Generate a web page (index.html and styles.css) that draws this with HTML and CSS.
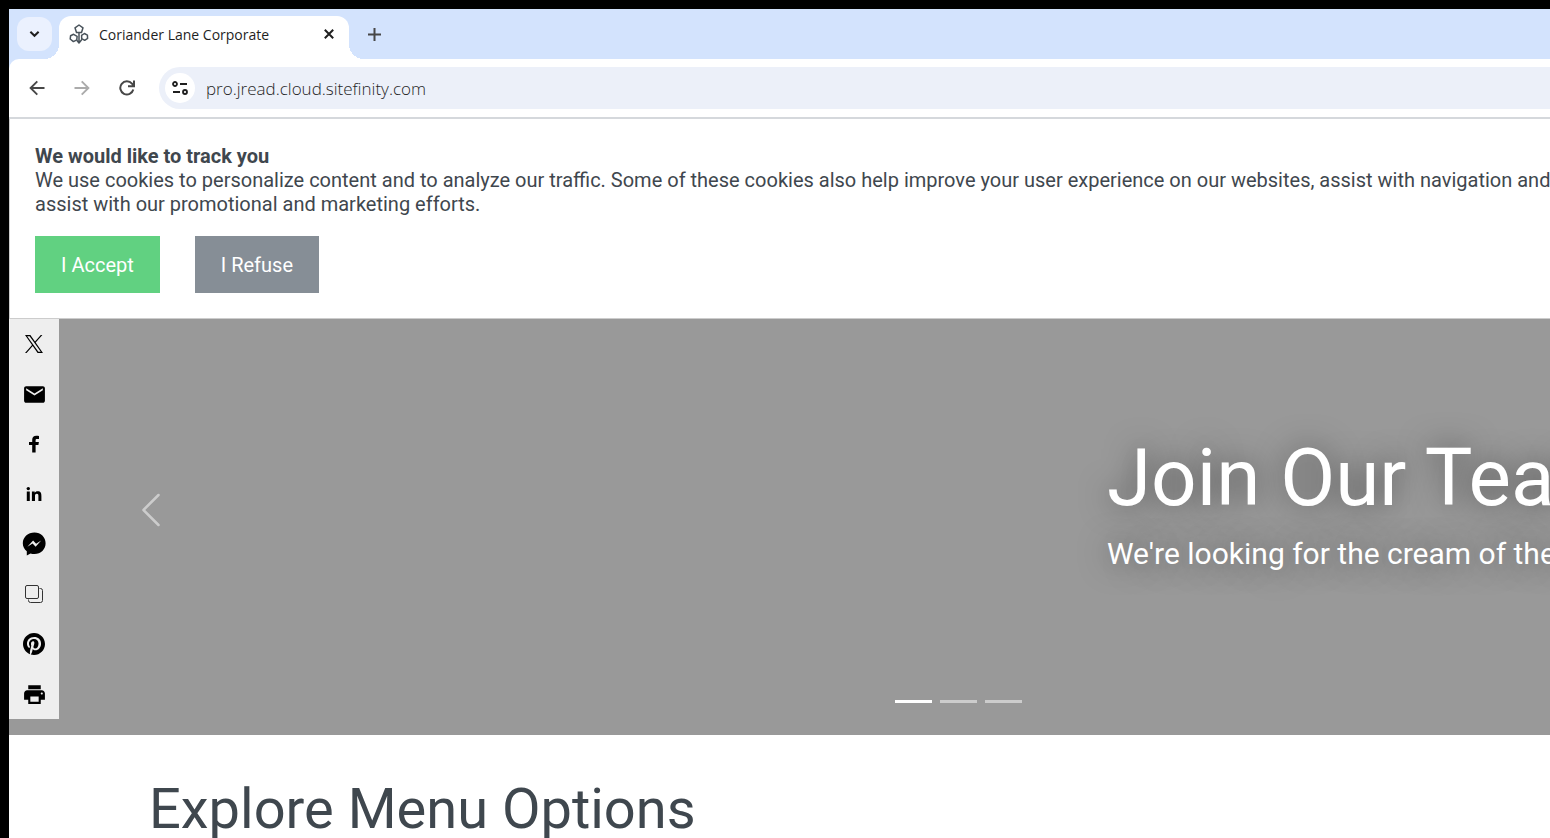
FILE: index.html
```html
<!DOCTYPE html>
<html lang="en">
<head>
<meta charset="utf-8">
<title>Coriander Lane Corporate</title>
<link rel="stylesheet" href="styles.css">
</head>
<body>
<div class="browser">
  <header class="chrome">
    <div class="tab-strip">
      <button class="tab-search" aria-label="Search tabs">
        <svg width="11" height="8" viewBox="0 0 12 8"><path d="M1.500 1.500 6 6l4.500-4.500" fill="none" stroke="#1f1f1f" stroke-width="2.200"/></svg>
      </button>
      <div class="tab">
        <svg class="tab-icon" width="20" height="20" viewBox="0 0 20 20" fill="none" stroke="#48525a" stroke-width="1.500" stroke-linejoin="round"><path d="M10 1l4 2.800-1.500 4.700h-5L6 3.800zM4.600 10.300l3.500 2-.3 3.600-3.400 1.700L1.200 15l.4-3.300zM15.400 9.500l3 1.600.2 3.300-2.900 1.900-3-1.600-.1-3.300z"/><path d="M10 8.500v11M7.800 16.200 10 19l3-3.800"/></svg>
        <span class="tab-title">Coriander Lane Corporate</span>
        <button class="tab-close" aria-label="Close tab">
          <svg width="10" height="10" viewBox="0 0 10 10"><path d="M.8.8l8.400 8.400M9.200.8.8 9.200" stroke="#1f1f1f" stroke-width="2"/></svg>
        </button>
      </div>
      <button class="new-tab" aria-label="New tab">
        <svg width="13" height="13" viewBox="0 0 13 13"><path d="M6.500 0v13M0 6.500h13" stroke="#474747" stroke-width="2"/></svg>
      </button>
    </div>
    <div class="toolbar">
      <button class="nav-button" aria-label="Back">
        <svg width="16" height="16" viewBox="0 0 16 16" fill="none" stroke="#474747" stroke-width="1.900"><path d="M15.500 8H2M8.300 1.300 1.600 8l6.700 6.700"/></svg>
      </button>
      <button class="nav-button" aria-label="Forward">
        <svg width="16" height="16" viewBox="0 0 16 16" fill="none" stroke="#ababab" stroke-width="1.900"><path d="M.5 8H14M7.700 1.300 14.400 8l-6.700 6.700"/></svg>
      </button>
      <button class="nav-button" aria-label="Reload">
        <svg width="16" height="16" viewBox="0 0 16 16" fill="none" stroke="#474747" stroke-width="2"><path d="M14.300 9.500A6.600 6.600 0 1 1 13 3.700L14.500 5.500M15 .5v5.700H9"/></svg>
      </button>
      <div class="omnibox">
        <button class="site-info" aria-label="View site information">
          <svg width="16" height="14" viewBox="0 0 16 14" fill="none" stroke="#1f1f1f" stroke-width="1.800"><circle cx="3" cy="3" r="2"/><circle cx="13" cy="11" r="2"/><path d="M8 3h7M1 11h7"/></svg>
        </button>
        <input class="address" type="text" aria-label="Address" value="pro.jread.cloud.sitefinity.com">
      </div>
    </div>
  </header>

  <section class="consent" aria-label="Cookie consent">
    <strong>We would like to track you</strong>
    <p>We use cookies to personalize content and to analyze our traffic. Some of these cookies also help improve your user experience on our websites, assist with navigation and<br>assist with our promotional and marketing efforts.</p>
    <div class="consent-actions">
      <button class="consent-button accept">I Accept</button>
      <button class="consent-button refuse">I Refuse</button>
    </div>
  </section>

  <main>
    <section class="hero">
      <nav class="share" aria-label="Share">
        <a href="#" aria-label="X"><svg width="18" height="18" viewBox="0 0 24 24"><path d="M14.258 10.152 23.176 0h-2.113l-7.747 8.813L7.133 0H0l9.352 13.328L0 23.973h2.113l8.176-9.309 6.531 9.309h7.133zM11.360 13.447l-.949-1.329L2.875 1.560h3.246l6.086 8.523.945 1.328 7.910 11.077h-3.246z"/></svg></a>
        <a href="#" aria-label="Email"><svg width="25" height="25" viewBox="0 0 24 24"><path d="M20 4H4c-1.100 0-2 .9-2 2v12c0 1.100.9 2 2 2h16c1.100 0 2-.9 2-2V6c0-1.100-.9-2-2-2zm0 4-8 5-8-5V6l8 5 8-5z"/></svg></a>
        <a href="#" aria-label="Facebook"><svg width="18" height="18" viewBox="0 0 18 18"><path d="M14 3.900h-2c-1 0-1.400.5-1.400 1.400v1.800h3.300l-.5 2.800h-2.800V17.500H7.200V9.900H4V7.100h3.200V4.800C7.200 2.300 8.800.8 11.200.8c1.200 0 2.100.1 2.800.2z"/></svg></a>
        <a href="#" aria-label="LinkedIn"><svg width="16" height="16" viewBox="0 0 16 16"><circle cx="2.300" cy="2.600" r="1.700"/><path d="M.8 5.500h3V15h-3zM5.900 5.500h2.800v1.300c.5-.9 1.500-1.600 3-1.600 3.100 0 3.700 2 3.700 4.700V15h-3v-4.700c0-1.200 0-2.500-1.600-2.500S9 9 9 10.300V15H5.900z"/></svg></a>
        <a href="#" aria-label="Messenger"><svg width="24" height="24" viewBox="0 0 24 24"><path d="M12.500.5C6 .5.8 5.100.8 11.200c0 3.400 1.600 6.100 4 8.100V23.500l3.700-2.100c1.300.4 2.600.6 4 .6 6.300 0 11.100-4.800 11.100-10.800S18.800.5 12.500.5zM5.400 14.700l5.700-6.200 3 3.300 5.100-3.300-5.600 6.300-3-3.300z"/></svg></a>
        <a href="#" aria-label="Copy link"><svg width="18" height="18" viewBox="0 0 18 18" fill="none" stroke="#333"><path d="M14.500 3.500h1q2 0 2 2v10q0 2-2 2h-10q-2 0-2-2v-1"/><rect x=".5" y=".5" width="13" height="13" rx="1.500"/></svg></a>
        <a href="#" aria-label="Pinterest"><svg width="22" height="22" viewBox="0 0 24 24"><path d="M12 0C5.370 0 0 5.370 0 12c0 5.090 3.160 9.430 7.630 11.180-.11-.95-.2-2.410.04-3.440.22-.94 1.410-5.960 1.410-5.960s-.36-.72-.36-1.780c0-1.670.97-2.910 2.170-2.910 1.020 0 1.520.77 1.520 1.690 0 1.030-.66 2.570-1 3.990-.28 1.190.6 2.170 1.780 2.170 2.130 0 3.770-2.250 3.770-5.490 0-2.870-2.060-4.880-5.010-4.880-3.410 0-5.410 2.560-5.410 5.200 0 1.030.4 2.140.89 2.740.1.120.11.220.08.340-.09.380-.29 1.190-.33 1.360-.05.220-.17.270-.4.160-1.500-.7-2.430-2.890-2.430-4.650 0-3.780 2.750-7.260 7.930-7.260 4.160 0 7.400 2.970 7.400 6.930 0 4.140-2.610 7.460-6.230 7.460-1.220 0-2.360-.63-2.750-1.380l-.75 2.850c-.27 1.040-1 2.350-1.490 3.150 1.120.35 2.310.53 3.540.53 6.630 0 12-5.370 12-12S18.630 0 12 0z"/></svg></a>
        <a href="#" aria-label="Print"><svg width="25" height="25" viewBox="0 0 24 24"><path d="M19 8H5c-1.660 0-3 1.340-3 3v6h4v4h12v-4h4v-6c0-1.660-1.340-3-3-3zm-3 11H8v-5h8v5zm3-7c-.55 0-1-.45-1-1s.45-1 1-1 1 .45 1 1-.45 1-1 1zm-1-9H6v4h12V3z"/></svg></a>
      </nav>
      <button class="previous" aria-label="Previous slide">
        <svg width="40" height="40" viewBox="0 0 16 16" fill="#fff"><path d="M11.354 1.646a.5.5 0 0 1 0 .708L5.707 8l5.647 5.646a.5.5 0 0 1-.708.708l-6-6a.5.5 0 0 1 0-.708l6-6a.5.5 0 0 1 .708 0z"/></svg>
      </button>
      <div class="slide">
        <h1>Join Our Team</h1>
        <p>We're looking for the cream of the crop</p>
      </div>
      <div class="indicators">
        <button class="indicator active" aria-label="Slide 1"></button>
        <button class="indicator" aria-label="Slide 2"></button>
        <button class="indicator" aria-label="Slide 3"></button>
      </div>
    </section>
    <section class="menu-options">
      <h2>Explore Menu Options</h2>
    </section>
  </main>
</div>
</body>
</html>
```
FILE: styles.css
```css
* {
  box-sizing: border-box;
}

body {
  margin: 0;
  height: 100vh;
  padding: 9px 0 0 9px;
  overflow: hidden;
  background: #000;
  color: #3f474e;
  font-family: Roboto, "Liberation Sans", sans-serif;
}

button {
  border: 0;
  padding: 0;
  background: none;
  font: inherit;
}

svg {
  display: block;
}

h1,
h2,
p {
  margin: 0;
  font-weight: 400;
}

.browser {
  min-height: 100vh;
  overflow: hidden;
  background: #fff;
}

/* Browser chrome */

.chrome {
  background: #d3e3fd;
  color: #1f1f1f;
  font-family: "Open Sans", "Noto Sans", sans-serif;
}

.tab-strip {
  display: flex;
  align-items: center;
  height: 50px;
  padding-left: 8px;
}

.tab-search {
  display: grid;
  place-items: center;
  width: 35px;
  height: 34px;
  border-radius: 12px;
  background: #ebf1fe;
}

.tab {
  position: relative;
  display: flex;
  align-items: center;
  align-self: flex-end;
  gap: 10px;
  width: 290px;
  height: 43px;
  margin-left: 7px;
  padding: 0 15px 7px 10px;
  border-radius: 12px 12px 0 0;
  background: #fff;
}

.tab::before,
.tab::after {
  content: "";
  position: absolute;
  bottom: 0;
  width: 15px;
  height: 15px;
}

.tab::before {
  right: 100%;
  background: radial-gradient(circle at 0 0, transparent 15px, #fff 15px);
}

.tab::after {
  left: 100%;
  background: radial-gradient(circle at 100% 0, transparent 15px, #fff 15px);
}

.tab-title {
  flex: 1;
  font-size: 14px;
  white-space: nowrap;
}

.new-tab {
  margin-left: 19px;
}

.toolbar {
  display: flex;
  align-items: center;
  height: 60px;
  padding-left: 20px;
  border-bottom: 2px solid #d5d8dc;
  border-radius: 10px 0 0 0;
  background: #fff;
}

.nav-button {
  display: grid;
  place-items: center;
  width: 16px;
  height: 42px;
  margin-right: 29px;
}

.omnibox {
  display: flex;
  flex: 1;
  align-items: center;
  gap: 11px;
  height: 42px;
  margin-left: -5px;
  padding-left: 6px;
  border-radius: 21px 0 0 21px;
  background: #ecf0f9;
}

.site-info {
  display: grid;
  flex: none;
  place-items: center;
  width: 30px;
  height: 30px;
  border-radius: 50%;
  background: #fff;
}

.address {
  flex: 1;
  border: 0;
  padding: 0;
  background: none;
  color: #1f1f1f;
  font: 300 17px "Open Sans", "Noto Sans", sans-serif;
}

/* Cookie consent */

.consent {
  padding: 25px 0 25px 25px;
  border-bottom: 1px solid #ccc;
  border-left: 1px solid #ccc;
  font-size: 20px;
  line-height: 24px;
}

.consent p {
  white-space: nowrap;
}

.consent strong {
  font-weight: 700;
}

.consent-actions {
  display: flex;
  gap: 35px;
  margin-top: 20px;
}

.consent-button {
  padding: 17px 26px 16px;
  color: #fff;
}

.accept {
  background: #61d181;
}

.refuse {
  background: #868e96;
}

/* Carousel */

.hero {
  position: relative;
  background: #999;
}

.share {
  position: absolute;
  top: 0;
  left: 0;
  width: 50px;
  background: #eee;
}

.share a {
  display: grid;
  place-items: center;
  height: 50px;
}

.previous {
  position: absolute;
  top: 171px;
  left: 122px;
  opacity: 0.5;
}

.slide {
  padding: 111px 0 163px 71.25%;
  overflow: hidden;
  color: #fff;
  text-shadow: 0 0 30px rgba(0, 0, 0, 0.5);
  white-space: nowrap;
}

.slide h1 {
  font-size: 80px;
  line-height: 96px;
}

.slide p {
  margin-top: 10px;
  font-size: 30px;
  line-height: 36px;
}

.indicators {
  position: absolute;
  bottom: 32px;
  left: 57.5%;
  display: flex;
  gap: 8px;
}

.indicator {
  width: 37px;
  height: 3px;
  background: #fff;
  opacity: 0.5;
}

.indicator.active {
  opacity: 1;
}

/* Menu options */

.menu-options {
  padding: 40px 140px;
}

.menu-options h2 {
  font-size: 56px;
  line-height: 68px;
}
```
